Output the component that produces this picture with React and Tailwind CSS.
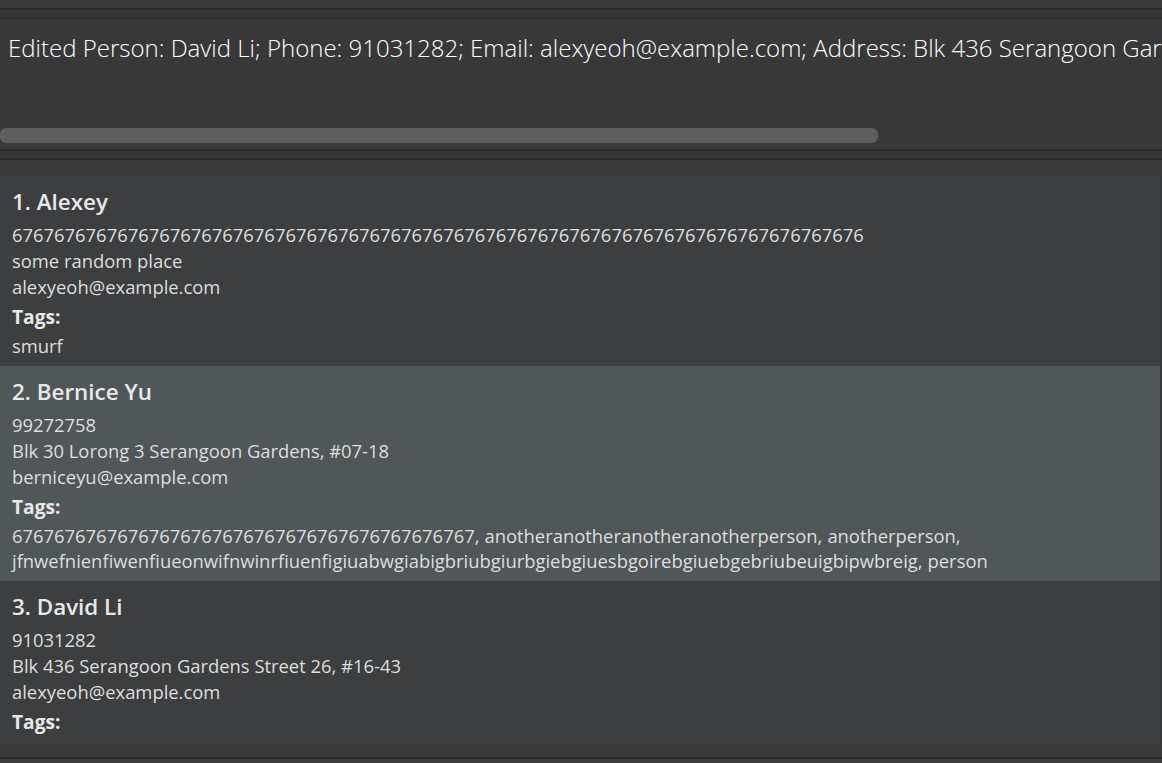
const people = [
  {
    name: "Alexey",
    phone: "67".repeat(40) + "6",
    address: "some random place",
    email: "alexyeoh@example.com",
    tags: ["smurf"],
  },
  {
    name: "Bernice Yu",
    phone: "99272758",
    address: "Blk 30 Lorong 3 Serangoon Gardens, #07-18",
    email: "berniceyu@example.com",
    tags: [
      "67".repeat(22),
      "anotheranotheranotheranotherperson",
      "anotherperson",
      "jfnwefnienfiwenfiueonwifnwinrfiuenfigiuabwgiabigbriubgiurbgiebgiuesbgoirebgiuebgebriubeuigbipwbreig",
      "person",
    ],
    selected: true,
  },
  {
    name: "David Li",
    phone: "91031282",
    address: "Blk 436 Serangoon Gardens Street 26, #16-43",
    email: "alexyeoh@example.com",
    tags: [],
  },
];

function PersonCard({ person, index }) {
  return (
    <div
      className={
        "w-[1160px] pt-[10px] pb-[8px] px-[12px] text-[#dedede] " +
        (person.selected ? "bg-[#515658]" : "bg-[#3c3e40]")
      }
    >
      <div className="text-[22.4px] leading-[32px] font-semibold text-[#e8e8e8] mb-[4px]">
        {index + 1}. {person.name}
      </div>
      <div className="text-[18.4px] leading-[26px]">{person.phone}</div>
      <div className="text-[18.4px] leading-[26px]">{person.address}</div>
      <div className="text-[18.4px] leading-[26px]">{person.email}</div>
      <div className="text-[19.2px] leading-[26px] mt-[4px] font-bold text-[#e8e8e8]">Tags:</div>
      {person.tags.length > 0 && (
        <div className="flex flex-wrap text-[18.4px] leading-[25px] mt-[3px]">
          {person.tags.map((t, i) => (
            <span key={i} className="whitespace-nowrap mr-[5px]">
              {t}
              {i < person.tags.length - 1 ? "," : ""}
            </span>
          ))}
        </div>
      )}
    </div>
  );
}

export default function App() {
  return (
    <div
      className="w-[1162px] h-[763px] overflow-hidden bg-[#3a3a3a] flex flex-col"
      style={{ fontFamily: '"Open Sans", "Noto Sans", sans-serif' }}
    >
      {/* command box area */}
      <div className="h-[8px] bg-[#3a3a3a]" />
      <div className="h-[11px] bg-[#363636] border-t-2 border-b border-[#2b2b2b]" />

      {/* result display */}
      <div className="h-[130px] bg-[#383838] flex flex-col">
        <div className="h-[109px] overflow-hidden pl-[8px] pt-[12px] whitespace-nowrap text-white font-light text-[24px] leading-[34px]">
          Edited Person: David Li; Phone: 91031282; Email: alexyeoh@example.com; Address: Blk 436 Serangoon Gardens Street 26, #16-43
        </div>
        <div className="h-[15px] w-[878px] rounded-[6px] bg-[#5f5f5f]" />
      </div>
      <div className="h-[11px] bg-[#363636] border-t-2 border-b-2 border-[#2b2b2b]" />
      <div className="h-[16px] bg-[#3a3a3a]" />

      {/* person list */}
      <div className="flex flex-col pr-[2px] bg-[#38393b]">
        {people.map((p, i) => (
          <PersonCard key={i} person={p} index={i} />
        ))}
      </div>
      <div className="h-[14px] bg-[#3a3a3a]" />
      <div className="h-[2px] bg-[#2b2b2b]" />
      <div className="flex-1 bg-[#3d3d3d]" />
    </div>
  );
}
